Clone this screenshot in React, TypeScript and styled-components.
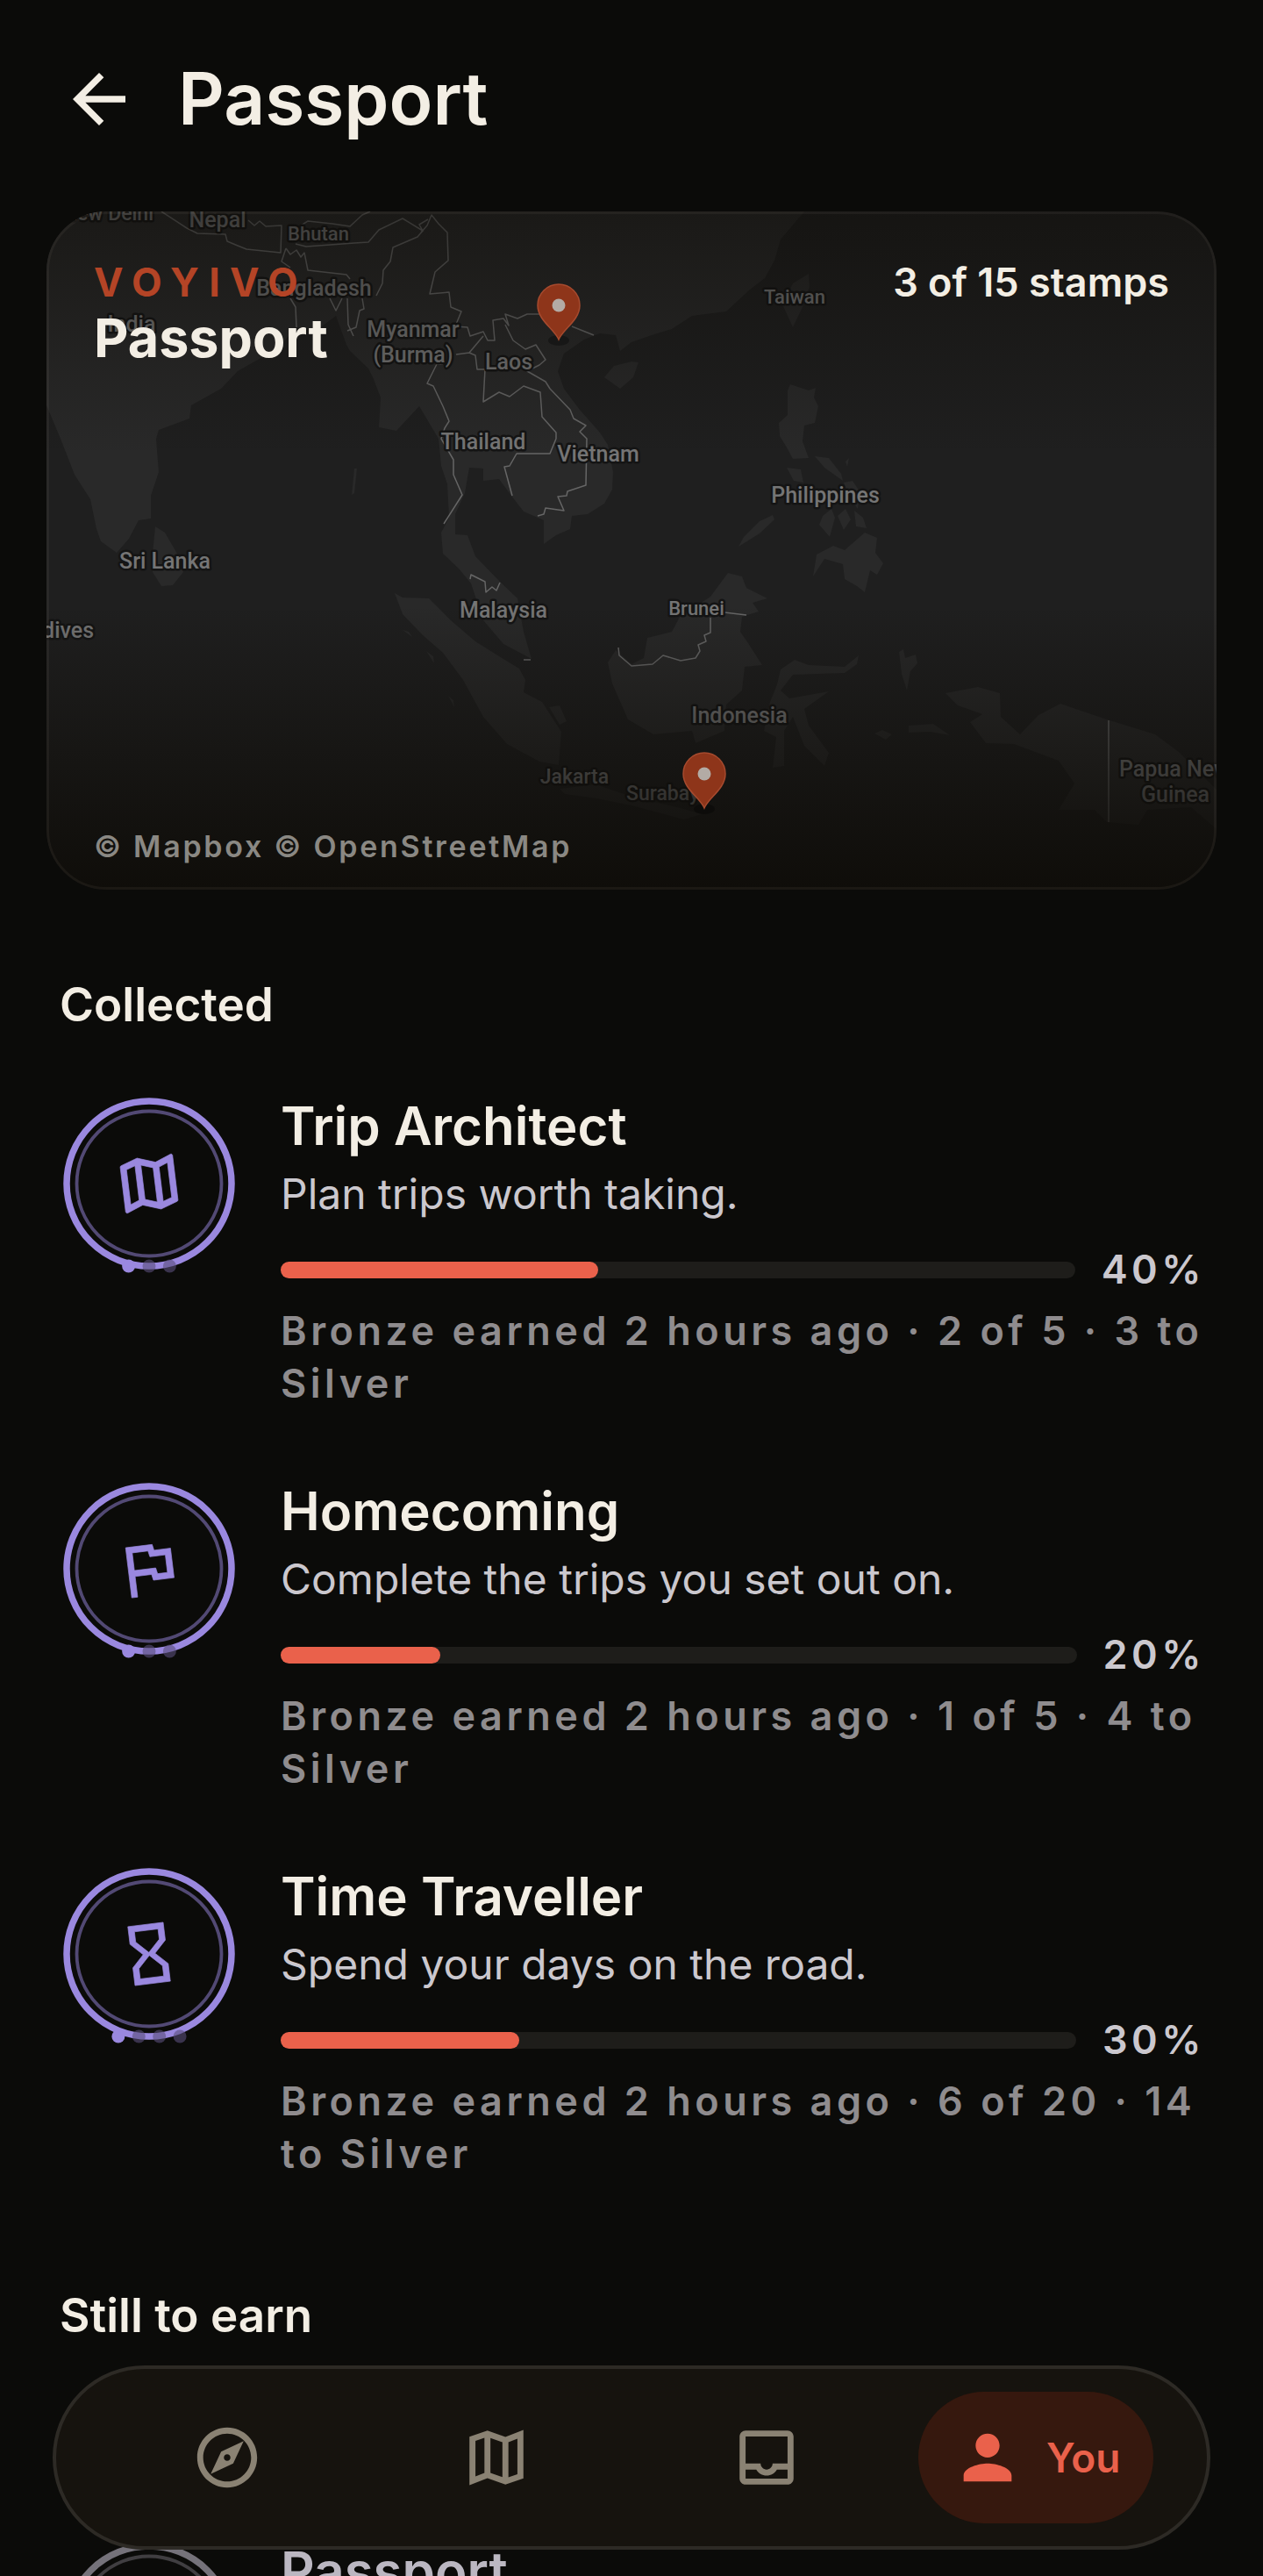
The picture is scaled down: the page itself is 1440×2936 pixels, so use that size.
import React from "react";
import styled, { createGlobalStyle } from "styled-components";

const color = {
  page: "#0b0b09",
  text: "#f3eee4",
  soft: "#cbc8ce",
  muted: "#8f8c8e",
  accent: "#ea614b",
  brand: "#b44426",
  violet: "#9a88df",
  nav: "#16130e",
  navLine: "#2d2a25",
  navIcon: "#8a8273",
  navActive: "#36180e",
};

const GlobalStyle = createGlobalStyle`
  *, *::before, *::after { box-sizing: border-box; }
  body { margin: 0; background: ${color.page}; }
  button { font: inherit; color: inherit; background: none; border: 0; padding: 0; cursor: pointer; }
  h1, h2, h3, p, ul { margin: 0; padding: 0; }
  ul { list-style: none; }
`;

const Screen = styled.div`
  height: 100vh;
  overflow-y: auto;
  scrollbar-width: none;
  background: ${color.page};
  color: ${color.text};
  font-family: Inter, Roboto, sans-serif;
`;

const Header = styled.header`
  display: flex;
  align-items: center;
  gap: 45px;
  padding: 68px 68px 83px;
`;

const BackButton = styled.button`
  display: flex;
`;

const Title = styled.h1`
  font-size: 82px;
  line-height: 90px;
  font-weight: 600;
`;

const Card = styled.section`
  position: relative;
  display: flex;
  flex-direction: column;
  justify-content: space-between;
  min-height: 773px;
  margin: 0 53px;
  padding: 51px 54px 22px;
  border-radius: 68px;
  overflow: hidden;
  &::after {
    content: "";
    position: absolute;
    inset: 0;
    border: 3px solid rgba(255, 240, 210, 0.05);
    border-radius: 68px;
  }
`;

const MapArt = styled.svg`
  position: absolute;
  inset: 0;
  width: 100%;
  height: 100%;
`;

const CardTop = styled.div`
  position: relative;
  display: flex;
  justify-content: space-between;
  align-items: flex-start;
`;

const Brand = styled.p`
  font-size: 45px;
  line-height: 60px;
  font-weight: 700;
  letter-spacing: 0.25em;
  color: ${color.brand};
`;

const CardTitle = styled.h2`
  font-size: 61px;
  line-height: 67px;
  font-weight: 700;
`;

const Count = styled.p`
  font-size: 45px;
  line-height: 60px;
  font-weight: 600;
`;

const Credit = styled.p`
  position: relative;
  font-size: 34px;
  line-height: 54px;
  font-weight: 600;
  letter-spacing: 0.08em;
  color: #8a8883;
`;

const Section = styled.section<{ $top: number }>`
  padding: ${(p) => p.$top}px 66px 0 68px;
`;

const SectionTitle = styled.h2`
  font-size: 53px;
  line-height: 77px;
  font-weight: 600;
`;

const StampList = styled.ul<{ $top: number }>`
  display: flex;
  flex-direction: column;
  gap: 82px;
  margin-top: ${(p) => p.$top}px;
`;

const StampRow = styled.li`
  display: flex;
  align-items: flex-start;
  gap: 48px;
`;

const StampArt = styled.svg`
  flex: none;
  width: 204px;
  height: 204px;
`;

const StampBody = styled.div`
  flex: 1;
  min-width: 0;
`;

const StampTitle = styled.h3<{ $locked?: boolean }>`
  font-size: 60px;
  line-height: 66px;
  font-weight: 600;
  color: ${(p) => (p.$locked ? "#bbb7c1" : color.text)};
`;

const StampText = styled.p`
  margin-top: 10px;
  font-size: 48px;
  line-height: 69px;
  color: ${color.soft};
`;

const ProgressRow = styled.div`
  display: flex;
  align-items: center;
  gap: 30px;
  margin-top: 22px;
`;

const Track = styled.div`
  flex: 1;
  height: 19px;
  border-radius: 10px;
  background: #1e1d1a;
`;

const Fill = styled.div`
  height: 100%;
  border-radius: 10px;
  background: ${color.accent};
`;

const Percent = styled.span`
  font-size: 45px;
  line-height: 60px;
  font-weight: 600;
  letter-spacing: 0.1em;
  color: ${color.soft};
`;

const Meta = styled.p`
  margin-top: 10px;
  font-size: 45px;
  line-height: 60px;
  font-weight: 600;
  letter-spacing: 0.1em;
  color: ${color.muted};
`;

const Nav = styled.nav`
  position: fixed;
  left: 60px;
  right: 60px;
  bottom: 30px;
  display: flex;
  align-items: center;
  height: 210px;
  padding: 0 41px;
  border: 4px solid ${color.navLine};
  border-radius: 105px;
  background: ${color.nav};
`;

const NavSlot = styled.div`
  flex: 1;
  display: flex;
  justify-content: center;
`;

const NavButton = styled.button<{ $active?: boolean }>`
  display: flex;
  align-items: center;
  gap: 26px;
  height: 150px;
  padding: 0 38px;
  border-radius: 75px;
  font-size: 46px;
  font-weight: 600;
  color: ${(p) => (p.$active ? color.accent : color.navIcon)};
  background: ${(p) => (p.$active ? color.navActive : "transparent")};
`;

const glyphs = {
  back: "M20 11H7.83l5.59-5.59L12 4l-8 8 8 8 1.41-1.41L7.83 13H20v-2z",
  map: "M20.5 3l-.16.03L15 5.1 9 3 3.36 4.9c-.21.07-.36.25-.36.48V20.5c0 .28.22.5.5.5l.16-.03L9 18.9l6 2.1 5.64-1.9c.21-.07.36-.25.36-.48V3.5c0-.28-.22-.5-.5-.5zM10 5.47l4 1.4v11.66l-4-1.4V5.47zm-5 .99l3-1.01v11.7l-3 1.16V6.46zm14 11.08l-3 1.01V6.86l3-1.16v11.84z",
  flag: "M12.36 6l.4 2H18v6h-3.36l-.4-2H7V6h5.36M14 4H5v17h2v-7h5.6l.4 2h7V6h-5.6L14 4z",
  hourglass:
    "M6 2v6h.01L6 8.01 10 12l-4 4 .01.01H6V22h12v-5.99h-.01L18 16l-4-4 4-3.99-.01-.01H18V2H6zm10 14.5V20H8v-3.5l4-4 4 4zm-4-5l-4-4V4h8v3.5l-4 4z",
  mapSharp:
    "M15 5.1L9 3 3 5.02v16.2l6-2.33 6 2.1 6-2.02V2.77L15 5.1zm-5 .37l4 1.4v11.66l-4-1.4V5.47zm-5 .99l3-1.01v11.7l-3 1.16V6.46zm14 11.08l-3 1.01V6.86l3-1.16v11.84z",
  explore:
    "M12 2C6.48 2 2 6.48 2 12s4.48 10 10 10 10-4.48 10-10S17.52 2 12 2zm0 18c-4.41 0-8-3.59-8-8s3.59-8 8-8 8 3.59 8 8-3.59 8-8 8zm-5.5-2.5l7.51-3.49L17.5 6.5 9.99 9.99 6.5 17.5zm5.5-6.6c.61 0 1.1.49 1.1 1.1s-.49 1.1-1.1 1.1-1.1-.49-1.1-1.1.49-1.1 1.1-1.1z",
  inbox:
    "M19 3H5c-1.1 0-2 .9-2 2v14c0 1.1.9 2 2 2h14c1.1 0 2-.9 2-2V5c0-1.1-.9-2-2-2zm0 16H5v-3h3.56c.69 1.19 1.97 2 3.45 2s2.75-.81 3.45-2H19v3zm0-5h-4.99c0 1.1-.9 2-2 2s-2-.9-2-2H5V5h14v9z",
  person:
    "M12 12c2.21 0 4-1.79 4-4s-1.79-4-4-4-4 1.79-4 4 1.79 4 4 4zm0 2c-2.67 0-8 1.34-8 4v2h16v-2c0-2.66-5.33-4-8-4z",
};

type Glyph = keyof typeof glyphs;

function Icon({ name, size }: { name: Glyph; size: number }) {
  return (
    <svg width={size} height={size} viewBox="0 0 24 24" fill="currentColor" aria-hidden="true">
      <path d={glyphs[name]} />
    </svg>
  );
}

function Stamp({ glyph, tiers = 0, ink }: { glyph?: Glyph; tiers?: number; ink: string }) {
  const first = 102 - ((tiers - 1) * 23.4) / 2;
  return (
    <StampArt viewBox="0 0 204 204" aria-hidden="true">
      <circle cx="102" cy="99" r="94" fill="none" stroke={ink} strokeWidth="7.5" />
      <circle cx="102" cy="99" r="82.5" fill="none" stroke={ink} strokeOpacity="0.5" strokeWidth="3.8" />
      {glyph && (
        <g transform="translate(102 99) rotate(-7) scale(3.38) translate(-12 -12)">
          <path d={glyphs[glyph]} fill={ink} stroke={ink} strokeWidth="0.2" />
        </g>
      )}
      {Array.from({ length: tiers }, (_, i) => (
        <circle
          key={i}
          cx={first + i * 23.4}
          cy="193"
          r="7.5"
          fill={i === 0 ? ink : "#5a4f7c"}
          fillOpacity={i === 0 ? 1 : 0.6}
        />
      ))}
    </StampArt>
  );
}

const land = [
  "M53 241L53 462 69 500 85 541 103 569 110 603 115 617 133 630 147 614 158 593 172 591 172 565 181 538 178 500 181 490 216 477 218 462 252 443 271 423 294 410 321 393 337 373 363 375 383 360 395 393 399 400 420 420 425 430 434 453 432 487 452 491 478 463 494 490 500 500 503 531 510 552 512 590 503 607 505 631 523 648 537 665 551 707 574 734 606 751 597 720 590 682 569 662 542 634 533 610 519 609 519 586 530 562 535 533 551 534 551 548 569 546 583 565 597 583 620 593 620 620 634 610 650 603 652 588 670 586 689 574 698 558 699 538 693 507 684 493 661 467 643 443 636 423 643 403 666 387 684 380 702 382 707 400 720 390 743 382 766 375 789 360 828 355 855 330 872 317 883 297 890 273 917 241Z",
  "M177 600L188 607 202 631 209 652 197 667 184 668 174 652 174 631Z",
  "M689 430L700 417 720 412 728 413 722 430 707 443Z",
  "M922 312L904 323 892 347 904 373 915 350 923 327Z",
  "M901 438L922 445 930 442 928 453 933 463 929 482 917 485 915 503 922 522 904 523 897 510 889 497 888 482 898 473 898 445Z",
  "M897 533L913 535 916 550 905 548Z",
  "M929 520L945 522 959 540 961 548 940 533ZM964 526L968 522 966 532ZM962 550L972 548 980 560 978 580 968 566Z",
  "M938 588L948 580 952 590 946 612 934 598ZM955 588L964 580 970 592 962 604ZM974 582L984 590 988 602 976 600Z",
  "M881 587L883 592 866 608 842 623 848 612 866 594Z",
  "M931 632L950 622 963 627 986 607 1000 613 998 630 1007 642 1000 655 992 650 986 675 977 668 963 660 961 643 940 637 927 657Z",
  "M830 653L846 657 851 670 875 682 858 687 865 697 846 703 844 720 853 733 869 758 849 760 846 787 828 803 826 833 793 847 789 833 745 837 716 820 698 779 693 755 702 741 720 757 734 750 738 727 766 720 775 703 810 680Z",
  "M450 676L459 681 489 682 514 707 542 731 569 748 592 762 599 775 597 789 618 800 640 834 637 872 615 868 578 848 551 817 528 775 505 744 482 724 459 700Z",
  "M638 899L679 894 720 908 780 922 800 928 780 934 720 918 680 910 644 905Z",
  "M890 763L906 752 922 758 963 760 979 747 977 757 963 767 904 769 890 787 900 796 945 788 917 808 922 827 945 858 940 873 917 850 904 817 894 833 894 873 881 875 885 840 871 833 878 800 886 780Z",
  "M1025 743L1030 740 1032 750 1044 746 1046 756 1038 765 1034 787 1028 768Z",
  "M1036 827L1064 825 1083 838 1060 834 1036 835ZM997 836L1006 832 1017 837 1010 843Z",
  "M1078 790L1115 783 1140 790 1141 817 1163 837 1184 815 1209 802 1262 820 1317 837 1344 857 1387 900 1387 945 1358 920 1308 923 1298 940 1262 937 1248 923 1207 923 1225 893 1207 867 1156 848 1124 847 1106 823 1120 814 1092 804Z",
  "M459 718L466 720 470 726ZM486 742L494 748 495 756ZM511 793L517 798 518 806ZM626 806L638 804 646 822 638 826Z",
  "M404 534L407 534 404 562 401 564Z",
];

const borders = [
  "M184 241L213 260 225 266 257 267 259 275 271 280 281 284 320 288 321 257 303 258 296 252 290 257 283 251",
  "M335 262L351 252 379 255 399 258 413 245 422 241M337 278L349 281 404 277 420 276 432 262 459 249 482 263 478 256 488 250",
  "M482 263L476 270 448 282 445 298 437 308 436 323 429 337M413 340L415 352 410 354 406 373 396 377",
  "M480 265L487 257 492 245 500 255 510 265 511 297 496 310 490 335 512 333 514 350 526 355 519 372 533 373 536 383 551 378 556 388 564 388 562 365 574 363 580 371 576 358 590 363 601 358 615 358M652 372L677 382",
  "M551 383L535 402 520 404M535 402L542 405 544 421 553 421 551 458 569 447 581 452 597 440 616 447 618 475 634 493 634 500 627 517 589 517 581 531 575 532 584 565",
  "M576 370L585 388 599 398 611 393 622 410 615 416 601 423 622 435 627 443 650 467 654 477 668 485 661 492 669 500 668 553 647 560 646 565 636 566 643 582 622 579 620 586 613 588",
  "M505 415L498 415 487 437 494 440 505 463 512 480 507 488 503 500 517 524 517 541 527 564 506 597",
  "M536 660L537 655 553 663 554 675 561 669 566 673 570 664M597 752L605 752",
  "M705 738L706 747 720 759 744 757 756 747 776 753 793 750 798 742 796 735 805 731 803 724 810 721 810 704M826 698L851 701",
  "M326 283L331 290 338 285 343 293 347 288 351 308 395 313 399 318M326 283L321 298 331 305M331 340L337 350 338 373M376 340L383 354 390 340M396 340L397 370 403 383",
  "M1264 821L1264 937",
];

type Label = { x: number; y: number; text: string; anchor?: "start" | "middle" | "end"; size?: number };

const labels: Label[] = [
  { x: 175, y: 251, text: "New Delhi", anchor: "end", size: 23 },
  { x: 248, y: 259, text: "Nepal" },
  { x: 363, y: 274, text: "Bhutan", size: 22 },
  { x: 358, y: 337, text: "Bangladesh" },
  { x: 150, y: 378, text: "India" },
  { x: 471, y: 384, text: "Myanmar" },
  { x: 471, y: 413, text: "(Burma)" },
  { x: 580, y: 421, text: "Laos" },
  { x: 551, y: 512, text: "Thailand" },
  { x: 682, y: 526, text: "Vietnam" },
  { x: 188, y: 648, text: "Sri Lanka" },
  { x: 107, y: 727, text: "Maldives", anchor: "end" },
  { x: 574, y: 704, text: "Malaysia" },
  { x: 794, y: 701, text: "Brunei", size: 22 },
  { x: 941, y: 573, text: "Philippines" },
  { x: 906, y: 346, text: "Taiwan", size: 22 },
  { x: 843, y: 824, text: "Indonesia" },
  { x: 655, y: 893, text: "Jakarta", size: 23 },
  { x: 714, y: 912, text: "Surabaya", anchor: "start", size: 23 },
  { x: 1276, y: 885, text: "Papua New", anchor: "start" },
  { x: 1340, y: 914, text: "Guinea" },
];

function Pin({ x, y }: { x: number; y: number }) {
  return (
    <g transform={`translate(${x} ${y})`}>
      <ellipse cx="0" cy="1" rx="12" ry="6" fill="#000" fillOpacity="0.3" />
      <path
        d="M0 0C-5 -12 -24 -22 -24 -39A24 24 0 0 1 24 -39C24 -22 5 -12 0 0Z"
        fill="#8e351a"
        stroke="#a64a2e"
        strokeWidth="1.5"
      />
      <circle cx="0" cy="-39" r="7.5" fill="#b3aba5" />
    </g>
  );
}

function RegionMap() {
  return (
    <MapArt viewBox="53 241 1334 773" preserveAspectRatio="xMidYMid slice" role="img" aria-label="Stamps map">
      <defs>
        <linearGradient id="shade" x1="0" y1="0" x2="0" y2="1">
          <stop offset="0" stopColor="#0e0c08" stopOpacity="0.55" />
          <stop offset="0.36" stopColor="#0e0c08" stopOpacity="0" />
          <stop offset="0.58" stopColor="#0e0c08" stopOpacity="0" />
          <stop offset="1" stopColor="#0e0c08" stopOpacity="0.94" />
        </linearGradient>
      </defs>
      <rect x="53" y="241" width="1334" height="773" fill="#1f1f1f" />
      <g fill="#292929">
        {land.map((d) => (
          <path key={d} d={d} />
        ))}
      </g>
      <g fill="none" stroke="#666" strokeWidth="1.5" strokeLinejoin="round">
        {borders.map((d) => (
          <path key={d} d={d} />
        ))}
      </g>
      <g
        fill="#757575"
        stroke="#141414"
        strokeWidth="5"
        strokeLinejoin="round"
        paintOrder="stroke"
        fontFamily="Roboto, sans-serif"
        fontWeight="500"
      >
        {labels.map((l) => (
          <text key={l.text} x={l.x} y={l.y} fontSize={l.size ?? 25} textAnchor={l.anchor ?? "middle"}>
            {l.text}
          </text>
        ))}
      </g>
      <rect x="53" y="241" width="1334" height="773" fill="url(#shade)" />
      <Pin x={637} y={387} />
      <Pin x={803} y={921} />
    </MapArt>
  );
}

const collected = [
  {
    title: "Trip Architect",
    text: "Plan trips worth taking.",
    percent: 40,
    meta: "Bronze earned 2 hours ago · 2 of 5 · 3 to Silver",
    glyph: "map" as Glyph,
    tiers: 3,
  },
  {
    title: "Homecoming",
    text: "Complete the trips you set out on.",
    percent: 20,
    meta: "Bronze earned 2 hours ago · 1 of 5 · 4 to Silver",
    glyph: "flag" as Glyph,
    tiers: 3,
  },
  {
    title: "Time Traveller",
    text: "Spend your days on the road.",
    percent: 30,
    meta: "Bronze earned 2 hours ago · 6 of 20 · 14 to Silver",
    glyph: "hourglass" as Glyph,
    tiers: 4,
  },
];

const tabs: { glyph: Glyph; name: string; active?: boolean }[] = [
  { glyph: "explore", name: "Explore" },
  { glyph: "mapSharp", name: "Trips" },
  { glyph: "inbox", name: "Inbox" },
  { glyph: "person", name: "You", active: true },
];

export default function App() {
  return (
    <>
      <GlobalStyle />
      <Screen>
        <Header>
          <BackButton aria-label="Back">
            <Icon name="back" size={90} />
          </BackButton>
          <Title>Passport</Title>
        </Header>

        <Card>
          <RegionMap />
          <CardTop>
            <div>
              <Brand>VOYIVO</Brand>
              <CardTitle>Passport</CardTitle>
            </div>
            <Count>3 of 15 stamps</Count>
          </CardTop>
          <Credit>© Mapbox © OpenStreetMap</Credit>
        </Card>

        <Section $top={93}>
          <SectionTitle>Collected</SectionTitle>
          <StampList $top={66}>
            {collected.map((s) => (
              <StampRow key={s.title}>
                <Stamp glyph={s.glyph} tiers={s.tiers} ink={color.violet} />
                <StampBody>
                  <StampTitle>{s.title}</StampTitle>
                  <StampText>{s.text}</StampText>
                  <ProgressRow>
                    <Track role="progressbar" aria-label={s.title} aria-valuenow={s.percent}>
                      <Fill style={{ width: `${s.percent}%` }} />
                    </Track>
                    <Percent>{s.percent}%</Percent>
                  </ProgressRow>
                  <Meta>{s.meta}</Meta>
                </StampBody>
              </StampRow>
            ))}
          </StampList>
        </Section>

        <Section $top={116}>
          <SectionTitle>Still to earn</SectionTitle>
          <StampList $top={219}>
            <StampRow>
              <Stamp ink="#75727a" />
              <StampBody>
                <StampTitle $locked>Passport</StampTitle>
              </StampBody>
            </StampRow>
          </StampList>
        </Section>

        <Nav aria-label="Main">
          {tabs.map((t) => (
            <NavSlot key={t.name}>
              <NavButton $active={t.active} aria-label={t.name} aria-current={t.active ? "page" : undefined}>
                <Icon name={t.glyph} size={82} />
                {t.active && <span>{t.name}</span>}
              </NavButton>
            </NavSlot>
          ))}
        </Nav>
      </Screen>
    </>
  );
}
